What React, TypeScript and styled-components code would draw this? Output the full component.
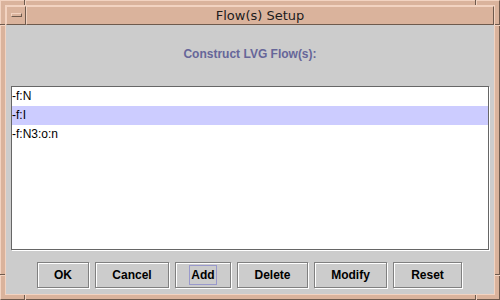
import styled, { createGlobalStyle } from "styled-components";

const GlobalStyle = createGlobalStyle`
  html, body {
    margin: 0;
    padding: 0;
    background: #ffffff;
  }
  body {
    font-family: "Liberation Sans", Arial, sans-serif;
  }
`;

const TAN = "#dab39c";
const TAN_LIGHT = "#f2d3c1";
const TAN_DARK = "#6e5a4d";

const Window = styled.div`
  position: relative;
  box-sizing: border-box;
  width: 500px;
  height: 300px;
  padding: 4px;
  background: ${TAN};
  border: 1px solid;
  border-color: ${TAN_LIGHT} ${TAN_DARK} ${TAN_DARK} ${TAN_LIGHT};
`;

const Inner = styled.div`
  box-sizing: border-box;
  height: 100%;
  display: flex;
  flex-direction: column;
  border: 1px solid ${TAN_LIGHT};
`;

const TitleBar = styled.div`
  display: flex;
  height: 19px;
  flex: none;
`;

const MenuButton = styled.div`
  box-sizing: border-box;
  width: 20px;
  display: flex;
  align-items: center;
  justify-content: center;
  border: 1px solid;
  border-color: ${TAN_LIGHT} ${TAN_DARK} ${TAN_DARK} ${TAN_LIGHT};
`;

const MenuBar = styled.div`
  box-sizing: border-box;
  width: 11px;
  height: 4px;
  margin-top: -2px;
  border: 1px solid;
  border-color: ${TAN_LIGHT} ${TAN_DARK} ${TAN_DARK} ${TAN_LIGHT};
`;

const Title = styled.div`
  box-sizing: border-box;
  flex: 1;
  display: flex;
  align-items: center;
  justify-content: center;
  border: 1px solid;
  border-color: ${TAN_LIGHT} ${TAN_DARK} ${TAN_DARK} ${TAN_LIGHT};
  font-family: "DejaVu Sans", sans-serif;
  font-size: 13px;
  color: #1c1c1c;
`;

const Tick = styled.div<{ $vertical?: boolean }>`
  position: absolute;
  box-sizing: border-box;
  width: ${(p) => (p.$vertical ? "2px" : "5px")};
  height: ${(p) => (p.$vertical ? "5px" : "2px")};
  border-${(p) => (p.$vertical ? "left" : "top")}: 1px solid ${TAN_DARK};
  border-${(p) => (p.$vertical ? "right" : "bottom")}: 1px solid ${TAN_LIGHT};
`;

const Content = styled.div`
  flex: 1;
  display: flex;
  flex-direction: column;
  background: #cccccc;
  padding: 0 5px 6px 5px;
`;

const Heading = styled.div`
  padding: 22px 0 25px 0;
  line-height: 14px;
  text-align: center;
  font-weight: bold;
  font-size: 12px;
  color: #666699;
`;

const List = styled.div`
  box-sizing: border-box;
  height: 164px;
  background: #ffffff;
  border: 1px solid #666666;
  box-shadow: 1px 1px 0 #ffffff;
`;

const Row = styled.div<{ $selected?: boolean }>`
  height: 19px;
  line-height: 19px;
  font-size: 12px;
  color: #000000;
  background: ${(p) => (p.$selected ? "#ccccff" : "transparent")};
`;

const ButtonRow = styled.div`
  display: flex;
  justify-content: center;
  gap: 6px;
  margin-top: 12px;
  padding-right: 1px;
`;

const Button = styled.div<{ $width: number }>`
  box-sizing: border-box;
  width: ${(p) => p.$width}px;
  height: 26px;
  display: flex;
  align-items: center;
  justify-content: center;
  border: 1px solid #808080;
  box-shadow: inset 1px 1px 0 #ffffff, 1px 1px 0 #ffffff;
  font-weight: bold;
  font-size: 12px;
  color: #000000;
`;

const Focus = styled.span`
  padding: 2px 1px;
  outline: 1px solid #9999cc;
  line-height: 14px;
`;

const rows = ["-f:N", "-f:I", "-f:N3:o:n"];
const buttons: [string, number][] = [
  ["OK", 52],
  ["Cancel", 74],
  ["Add", 56],
  ["Delete", 71],
  ["Modify", 73],
  ["Reset", 69],
];

export default function App() {
  return (
    <>
      <GlobalStyle />
      <Window>
        <Inner>
          <TitleBar>
            <MenuButton>
              <MenuBar />
            </MenuButton>
            <Title>Flow(s) Setup</Title>
          </TitleBar>
          <Content>
            <Heading>Construct LVG Flow(s):</Heading>
            <List>
              {rows.map((r, i) => (
                <Row key={r} $selected={i === 1}>
                  {r}
                </Row>
              ))}
            </List>
            <ButtonRow>
              {buttons.map(([label, w]) => (
                <Button key={label} $width={w}>
                  {label === "Add" ? <Focus>{label}</Focus> : label}
                </Button>
              ))}
            </ButtonRow>
          </Content>
        </Inner>
        <Tick $vertical style={{ left: 23, top: -1 }} />
        <Tick $vertical style={{ left: 474, top: -1 }} />
        <Tick $vertical style={{ left: 23, bottom: -1 }} />
        <Tick $vertical style={{ left: 474, bottom: -1 }} />
        <Tick style={{ left: -1, top: 23 }} />
        <Tick style={{ right: -1, top: 23 }} />
        <Tick style={{ left: -1, top: 273 }} />
        <Tick style={{ right: -1, top: 273 }} />
      </Window>
    </>
  );
}
